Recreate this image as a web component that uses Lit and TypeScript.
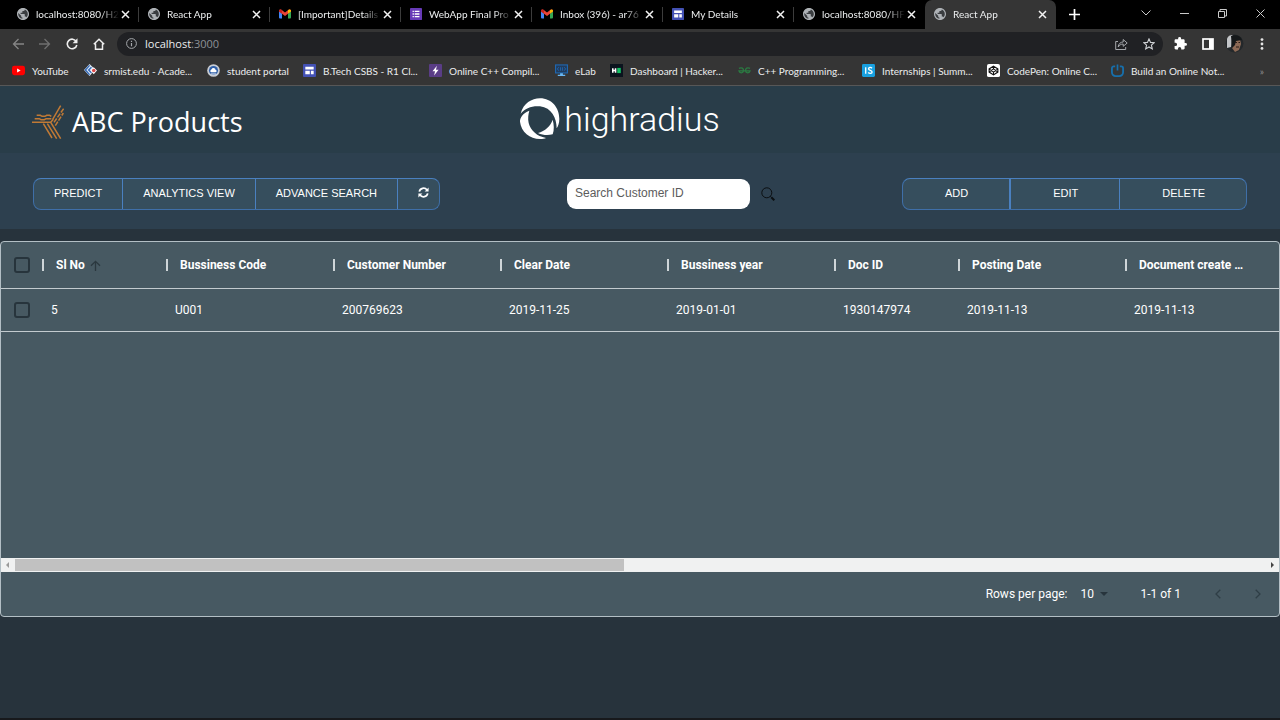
import { LitElement, html, svg, css } from "lit";
import { customElement, state } from "lit/decorators.js";
import { classMap } from "lit/directives/class-map.js";

const globe = html`<svg class="fav" viewBox="2 2 20 20"><circle cx="12" cy="12" r="9.6" fill="#3a3d40"/><path fill="#aeb2b6" d="M12 2C6.48 2 2 6.48 2 12s4.48 10 10 10 10-4.48 10-10S17.52 2 12 2zm-1 17.93c-3.95-.49-7-3.85-7-7.93 0-.62.08-1.21.21-1.79L9 15v1c0 1.1.9 2 2 2v1.93zm6.9-2.54c-.26-.81-1-1.39-1.9-1.39h-1v-3c0-.55-.45-1-1-1H8v-2h2c.55 0 1-.45 1-1V7h2c1.1 0 2-.9 2-2v-.41c2.93 1.19 5 4.06 5 7.41 0 2.08-.8 3.97-2.1 5.39z"/></svg>`;
const gmail = html`<svg class="fav" viewBox="0 0 24 24"><path fill="#4285f4" d="M0 6v13a2 2 0 0 0 2 2h4V11z"/><path fill="#34a853" d="M24 6v13a2 2 0 0 1-2 2h-4V11z"/><path fill="#ea4335" d="M0 6c0-3 3-4 5-2.400l7 5.400 7-5.400C21 2 24 3 24 6v1l-12 9L0 7z"/><path fill="#c5221f" d="M0 6c0-3 3-4 6-1.600V11L0 7z"/><path fill="#fbbc04" d="M24 6c0-3-3-4-6-1.600V11l6-4z"/></svg>`;
const forms = html`<svg class="fav" viewBox="0 0 14 14"><rect width="14" height="14" rx="1" fill="#673ab7"/><path d="M3 4h1.500M3 7h1.500M3 10h1.500M5.500 4H11M5.500 7H11M5.500 10H11" stroke="#fff" stroke-width="1.600"/></svg>`;
const sites = html`<svg class="fav" viewBox="0 0 14 14"><rect width="14" height="14" rx="1" fill="#4351b4"/><path d="M2.500 3h9v2.800h-9zM2.500 7.200h4.800V11H2.500zM8.500 7.200h3V11h-3z" fill="#fff"/></svg>`;

const tabs = [
  { icon: globe, title: "localhost:8080/H2" },
  { icon: globe, title: "React App" },
  { icon: gmail, title: "[Important]Details" },
  { icon: forms, title: "WebApp Final Pro" },
  { icon: gmail, title: "Inbox (396) - ar76" },
  { icon: sites, title: "My Details" },
  { icon: globe, title: "localhost:8080/HF" },
  { icon: globe, title: "React App", active: true },
];

const bookmarks = [
  { title: "YouTube", icon: html`<svg class="bm" viewBox="0 0 14 14"><rect y="2" width="14" height="10" rx="2.500" fill="#f00"/><path d="M5.500 4.800v4.400L9.300 7z" fill="#fff"/></svg>` },
  { title: "srmist.edu - Acade...", icon: html`<svg class="bm" viewBox="0 0 14 14"><path d="M6 0l6 6-6 7-6-6.500z" fill="#dfe9f5"/><path d="M6 1.500L1.500 6.500 6 11.500M8 3.500L5 6.500l3 3" fill="none" stroke="#3569b5" stroke-width="1.500"/><path d="M10.500 3.500L14 7l-3.500 4L7 7z" fill="#fff"/><circle cx="10.500" cy="7" r="1.900" fill="#dc4a4a"/></svg>` },
  { title: "student portal", icon: html`<svg class="bm" viewBox="0 0 14 14"><circle cx="7" cy="7" r="6.800" fill="#c9cdd4"/><circle cx="7" cy="7" r="4.900" fill="#2f5fa8"/><path d="M3.500 8c0-2 1.500-2 2-3.200 2-1 3.500.2 3.600 1.400 1.600.2 1.800 2.400.2 2.600H4.500z" fill="#fff"/><path d="M4 10.800h6" stroke="#fff"/></svg>` },
  { title: "B.Tech CSBS - R1 Cl...", icon: html`<svg class="bm" viewBox="0 0 14 14"><rect width="14" height="14" rx="1" fill="#4351b4"/><path d="M2.500 3h9v2.800h-9zM2.500 7.200h4.800V11H2.500zM8.500 7.200h3V11h-3z" fill="#fff"/></svg>` },
  { title: "Online C++ Compil...", icon: html`<svg class="bm" viewBox="0 0 14 14"><rect width="14" height="14" rx="1" fill="#5a3d86"/><path d="M8.500 1.800L3.800 7.800h2.700l-1 4.500 4.800-6.200H7.500z" fill="#fff"/></svg>` },
  { title: "eLab", icon: html`<svg class="bm" viewBox="0 0 14 14"><rect x=".6" y="1" width="12.800" height="8.600" fill="#223c5c" stroke="#1f67b1" stroke-width="1.200"/><path d="M4 3.500L2.600 5.300 4 7.200M10 3.500l1.400 1.800L10 7.200M6 3.500v3.700M8 3.500v3.700" fill="none" stroke="#1f67b1"/><path d="M5.500 10h3v1.500h2.500V13H3v-1.500h2.500z" fill="#67b7f5"/></svg>` },
  { title: "Dashboard | Hacker...", icon: html`<svg class="bm" viewBox="0 0 14 14"><rect width="14" height="14" fill="#0b141e"/><path d="M3 4.500v5M6 4.500v5M3 7h3" stroke="#fff" stroke-width="1.700"/><rect x="7.800" y="4.200" width="3.800" height="5.600" fill="#12c466"/></svg>` },
  { title: "C++ Programming...", icon: html`<svg class="bm" viewBox="0 0 14 14"><path d="M1 4.700c3-1.500 5 0 5 2.700-.5 2.800-4.500 2.800-5 0h5M13 4.700c-3-1.500-5 0-5 2.700.5 2.800 4.500 2.800 5 0H6" fill="none" stroke="#2b7a42" stroke-width="1.400"/></svg>` },
  { title: "Internships | Summ...", icon: html`<svg class="bm" viewBox="0 0 14 14"><rect width="14" height="14" rx="1.500" fill="#18a0e0"/><path d="M4 3.500v7M10.800 4.600C9.500 3.200 7 3.600 7 5.200c0 2.200 3.900 1.200 3.900 3.400 0 1.800-2.900 2-4.200.5" fill="none" stroke="#fff" stroke-width="1.400"/></svg>` },
  { title: "CodePen: Online C...", icon: html`<svg class="bm" viewBox="0 0 14 14"><rect width="14" height="14" rx="2" fill="#fff"/><path d="M7 2.300l4.700 3v3.400L7 11.700l-4.700-3V5.300zM7 2.300v3M7 8.700v3M2.300 5.300L7 8.700l4.700-3.400M2.300 8.700L7 5.300l4.700 3.400" fill="none" stroke="#111" stroke-width="1.200"/></svg>` },
  { title: "Build an Online Not...", icon: html`<svg class="bm" viewBox="0 0 14 14"><path d="M4.500 2.500H3a2 2 0 0 0-2 2V9a4 4 0 0 0 4 4h4a4 4 0 0 0 4-4V4.500a2 2 0 0 0-2-2H9.500" fill="none" stroke="#176fab" stroke-width="2"/><path d="M7 .5V7" stroke="#176fab" stroke-width="1.800"/></svg>` },
];

const columns = [
  { title: "Sl No", value: "5", sorted: true, narrow: true },
  { title: "Bussiness Code", value: "U001" },
  { title: "Customer Number", value: "200769623" },
  { title: "Clear Date", value: "2019-11-25" },
  { title: "Bussiness year", value: "2019-01-01" },
  { title: "Doc ID", value: "1930147974", narrow: true },
  { title: "Posting Date", value: "2019-11-13" },
  { title: "Document create …", value: "2019-11-13" },
];

const cross = svg`<path d="M1 1l7 7M8 1l-7 7"/>`;

@customElement("browser-chrome")
class BrowserChrome extends LitElement {
  static styles = css`
    :host { display: block; color: #eceeef; font: 10px/14px Lato, "Open Sans", sans-serif; }
    button { border: 0; padding: 0; background: none; color: inherit; font: inherit; display: grid; place-items: center; }
    a { color: inherit; text-decoration: none; }
    svg { display: block; fill: none; }
    .tabs { display: flex; height: 29px; background: #000; padding-left: 8px; padding-right: 1px; }
    .tab { display: flex; align-items: center; flex: 0 1 131px; min-width: 0; box-sizing: border-box; padding: 0 9px 1px 9px; position: relative; }
    .tab::after { content: ""; position: absolute; right: 0; top: 7px; height: 15px; width: 1px; background: #3c3c3c; }
    .tab.active { background: #353535; border-radius: 7px 7px 0 0; }
    .tab.active::after, .tab.quiet::after { display: none; }
    .fav { width: 12px; height: 12px; flex: none; margin-right: 7px; }
    .title { flex: 1; min-width: 0; overflow: hidden; white-space: nowrap; -webkit-mask-image: linear-gradient(90deg, #000 78%, transparent); mask-image: linear-gradient(90deg, #000 78%, transparent); }
    .x { stroke: #f2f2f2; stroke-width: 1.500; width: 9px; height: 9px; margin-left: 2px; }
    .plus { width: 36px; }
    .space { flex: 1; }
    .win { width: 38px; height: 26px; }
    .line { stroke: #c9c9c9; stroke-width: 1; }
    .bar { display: flex; align-items: center; height: 29px; background: #353535; padding: 0 5px 0 4px; }
    .tool { width: 27px; height: 24px; }
    .address { display: flex; flex: 1; align-items: center; height: 24px; margin: 0 4px 0 5px; padding: 0 1px 0 9px; border-radius: 12px; background: #202124; font: 11px/14px "Open Sans", sans-serif; }
    .url { flex: 1; margin-left: 8px; }
    .url span { color: #8d9196; }
    .marks { display: grid; grid-template-columns: 72px 123px 96px 126px 126px 55px 128px 124px 125px 124px 1fr auto; align-items: center; height: 28px; box-sizing: border-box; padding: 0 16px 2px 12px; background: #353535; border-bottom: 1px solid #575757; }
    .mark { display: flex; align-items: center; gap: 7px; white-space: nowrap; }
    .bm { width: 13px; height: 13px; flex: none; }
    .more { color: #8f8f8f; }
  `;
  render() {
    return html`
      <div class="tabs">
        ${tabs.map((t, i) => html`<div class=${classMap({ tab: true, active: !!t.active, quiet: i === tabs.length - 2 })}>
          ${t.icon}<span class="title">${t.title}</span>
          <button aria-label="Close tab"><svg class="x" viewBox="0 0 9 9">${cross}</svg></button></div>`)}
        <button class="plus" aria-label="New tab"><svg width="11" height="11" viewBox="0 0 11 11"><path d="M5.500 0v11M0 5.500h11" stroke="#fff" stroke-width="1.700"/></svg></button>
        <span class="space"></span>
        <button class="win" aria-label="Search tabs"><svg class="line" width="10" height="6" viewBox="0 0 10 6"><path d="M.5.5L5 5l4.500-4.500"/></svg></button>
        <button class="win" aria-label="Minimize"><svg class="line" width="9" height="9" viewBox="0 0 9 9"><path d="M0 4.500h9"/></svg></button>
        <button class="win" aria-label="Restore"><svg class="line" width="9" height="9" viewBox="0 0 9 9"><path d="M.5 2.500h6v6h-6zM2 2.500v-2h6.500V7h-2"/></svg></button>
        <button class="win" aria-label="Close"><svg class="line" width="9" height="9" viewBox="0 0 9 9"><path d="M.5.5l8 8M8.500.5l-8 8"/></svg></button>
      </div>
      <div class="bar">
        <button class="tool" aria-label="Back"><svg width="12" height="12" viewBox="0 0 12 12"><path d="M12 6H1.500M6.500 1l-5 5 5 5" stroke="#858585" stroke-width="1.300"/></svg></button>
        <button class="tool" aria-label="Forward"><svg width="12" height="12" viewBox="0 0 12 12"><path d="M0 6h10.500M5.500 1l5 5-5 5" stroke="#6f6f6f" stroke-width="1.300"/></svg></button>
        <button class="tool" aria-label="Reload"><svg width="12" height="12" viewBox="0 0 12 12"><path d="M10.300 3.600A4.800 4.800 0 1 0 10.800 7" stroke="#eee" stroke-width="1.600"/><path d="M11.500.3v4.900H6.600z" fill="#eee"/></svg></button>
        <button class="tool" aria-label="Home"><svg width="12" height="12" viewBox="0 0 12 12"><path d="M.8 6.300L6 1.200l5.200 5.100M2.500 5.500v5.700h7V5.500" stroke="#eee" stroke-width="1.500"/></svg></button>
        <div class="address">
          <svg width="11" height="11" viewBox="0 0 11 11"><circle cx="5.500" cy="5.500" r="4.900" stroke="#a5a8ac"/><path d="M5.500 5v3.200M5.500 2.700V4" stroke="#a5a8ac" stroke-width="1.200"/></svg>
          <span class="url">localhost<span>:3000</span></span>
          <button class="tool" aria-label="Share"><svg width="13" height="12" viewBox="0 0 13 12"><path d="M3 3.500H.7v8h10V9M3.200 9C3.500 5.800 5.500 4 8.200 4V1.500L12.200 5 8.200 8.300V6C6 6 4.500 7 3.200 9z" stroke="#a5a8ac"/></svg></button>
          <button class="tool" aria-label="Bookmark"><svg width="12" height="12" viewBox="0 0 12 12"><path d="M6 .9l1.500 3.500 3.800.3-2.900 2.500.9 3.700L6 9l-3.300 1.900.9-3.700L.7 4.700l3.800-.3z" stroke="#d0d3d6" stroke-width="1.100"/></svg></button>
        </div>
        <button class="tool" aria-label="Extensions"><svg width="13" height="13" viewBox="1 1 22 22"><path fill="#fff" d="M20.500 11H19V7c0-1.100-.9-2-2-2h-4V3.500a2.500 2.500 0 0 0-5 0V5H4c-1.100 0-2 .9-2 2v3.800h1.500a2.700 2.700 0 0 1 0 5.400H2V20c0 1.100.9 2 2 2h3.800v-1.500a2.700 2.700 0 0 1 5.400 0V22H17c1.100 0 2-.9 2-2v-4h1.500a2.500 2.500 0 0 0 0-5z"/></svg></button>
        <button class="tool" aria-label="Side panel"><svg width="12" height="12" viewBox="0 0 12 12"><rect x="1" y="1" width="10" height="10" stroke="#fff" stroke-width="1.700"/><path d="M7 1h4v10H7z" fill="#fff"/></svg></button>
        <button class="tool" aria-label="Profile"><svg width="19" height="19" viewBox="0 0 19 19"><circle cx="9.500" cy="9.500" r="9" fill="#24282b"/><path d="M2 4.500C3 2 5 1 7.500 1L6 13l-4 1z" fill="#c3c5c8"/><path d="M8 6l7-1 1 5-2 6-4 2-3-4z" fill="#8d6a56"/><path d="M6 2c5-2 10 0 11 4l-6 1-1 4-3 3z" fill="#15181a"/><path d="M10 8.500h2M13.500 8.500H15M11 13h3" stroke="#2a1d18"/></svg></button>
        <button class="tool" aria-label="Menu"><svg width="4" height="12" viewBox="0 0 4 12"><g fill="#e6e6e6"><circle cx="2" cy="1.600" r="1.400"/><circle cx="2" cy="6" r="1.400"/><circle cx="2" cy="10.400" r="1.400"/></g></svg></button>
      </div>
      <nav class="marks">
        ${bookmarks.map((b) => html`<a class="mark" href="#">${b.icon}<span>${b.title}</span></a>`)}
        <span class="more">»</span>
      </nav>`;
  }
}

@customElement("invoice-grid")
class InvoiceGrid extends LitElement {
  static styles = css`
    :host { display: block; border: 1px solid #b3bfc5; border-radius: 4px; overflow: hidden; background: #475962; color: #fff; font: 12px/18px Roboto, sans-serif; }
    .body { height: 316px; overflow: hidden; }
    table { table-layout: fixed; border-collapse: separate; border-spacing: 0; width: 1291px; }
    .pick { width: 41px; }
    .narrow { width: 124px; }
    .wide { width: 167px; }
    th, td { padding: 0; border-bottom: 1px solid #c3cbcf; text-align: left; white-space: nowrap; }
    th { height: 46px; font-weight: 700; }
    td { height: 42px; padding-left: 9px; }
    .check { padding-left: 13px; }
    .head { display: flex; align-items: center; }
    .head::before { content: ""; width: 2px; height: 12px; margin-right: 12px; background: #ced5d8; }
    .arrow { margin-left: 5px; }
    input { appearance: none; display: block; box-sizing: border-box; width: 16px; height: 16px; margin: 0; border: 2px solid #27343c; border-radius: 3px; }
    .scroll { display: flex; align-items: center; height: 14px; background: #f0f1f1; }
    .scroll svg { flex: none; width: 14px; height: 8px; }
    .track { flex: 1; height: 12px; }
    .thumb { height: 12px; background: #c1c1c1; }
    .foot { display: flex; align-items: center; justify-content: flex-end; height: 44px; padding-right: 7px; }
    .pager { position: relative; display: flex; align-items: center; margin: 0 32px 0 13px; }
    select { appearance: none; width: 28px; padding: 0; border: 0; background: none; color: inherit; font: inherit; }
    .caret { position: absolute; right: 0; pointer-events: none; }
    .range { margin-right: 23px; }
    .step { display: grid; place-items: center; width: 28px; height: 28px; margin-right: 12px; padding: 0; border: 0; background: none; }
    .step:last-child { margin-right: 0; }
  `;
  render() {
    return html`
      <div class="body"><table>
        <colgroup><col class="pick">${columns.map((c) => html`<col class=${c.narrow ? "narrow" : "wide"}>`)}</colgroup>
        <thead><tr><th class="check"><input type="checkbox" aria-label="Select all rows"></th>
          ${columns.map((c) => html`<th><div class="head">${c.title}${c.sorted ? html`<svg class="arrow" width="11" height="11" viewBox="0 0 11 11"><path d="M5.500 11V1.500M1 5.800l4.500-4.500L10 5.800" fill="none" stroke="#2b383f" stroke-width="1.300"/></svg>` : ""}</div></th>`)}
        </tr></thead>
        <tbody><tr><td class="check"><input type="checkbox" aria-label="Select row 5"></td>${columns.map((c) => html`<td>${c.value}</td>`)}</tr></tbody>
      </table></div>
      <div class="scroll">
        <svg viewBox="0 0 14 8"><path d="M8 1v6L5 4z" fill="#9a9a9a"/></svg>
        <div class="track"><div class="thumb" style="width:${(609 / 1250) * 100}%"></div></div>
        <svg viewBox="0 0 14 8"><path d="M6 1v6l3-3z" fill="#444"/></svg>
      </div>
      <div class="foot">
        <label for="size">Rows per page:</label>
        <span class="pager"><select id="size"><option>10</option><option>25</option></select><svg class="caret" width="8" height="4" viewBox="0 0 8 4"><path d="M0 0h8L4 4z" fill="#27343c"/></svg></span>
        <span class="range">1-1 of 1</span>
        <button class="step" aria-label="Previous page"><svg width="6" height="10" viewBox="0 0 6 10"><path d="M5.300.7L1 5l4.300 4.300" fill="none" stroke="#2f3e46" stroke-width="1.300"/></svg></button>
        <button class="step" aria-label="Next page"><svg width="6" height="10" viewBox="0 0 6 10"><path d="M.7.7L5 5 .7 9.300" fill="none" stroke="#2f3e46" stroke-width="1.300"/></svg></button>
      </div>`;
  }
}

@customElement("app-root")
class AppRoot extends LitElement {
  static styles = css`
    :host { display: flex; flex-direction: column; box-sizing: border-box; min-height: 100vh; background: #27333c; border-bottom: 2px solid #17191c; color: #fff; }
    svg { display: block; }
    .brand { display: grid; grid-template-columns: 1fr auto 1fr; align-items: center; height: 67px; box-sizing: border-box; padding: 0 72px 0 32px; background: #293d49; }
    .abc { display: flex; align-items: center; gap: 8px; font: 27px/36px "Open Sans", "Noto Sans", sans-serif; padding-top: 4px; }
    .radius { display: flex; align-items: center; gap: 4px; padding-bottom: 2px; font: 300 34px/40px Roboto, sans-serif; }
    .actions { display: flex; align-items: center; justify-content: space-between; height: 76px; box-sizing: border-box; padding: 5px 33px 0; background: #2d404f; margin-bottom: 12px; }
    .group { display: flex; height: 32px; box-sizing: border-box; border: 1px solid #3f6fa8; border-top-color: #4a80c0; border-radius: 8px; overflow: hidden; background: #364e5d; }
    .group button { display: grid; place-items: center; padding: 0 20px 2px; border: 0; border-left: 1px solid #4a80c0; background: none; color: #fff; font: 11px/16px "Liberation Sans", Arial, sans-serif; }
    .group button:first-child { border-left: 0; }
    .group .icon { padding: 0 10px 2px 20px; }
    .group.crud button { padding: 0 41px 2px 42px; }
    .crud button:nth-child(2) { border-left-width: 2px; }
    .search { display: flex; align-items: center; gap: 11px; }
    .search input { box-sizing: border-box; width: 183px; height: 30px; padding: 0 8px 2px; border: 0; border-radius: 9px; background: #fff; color: #333; font: 12px/16px "Liberation Sans", Arial, sans-serif; }
    .search input::placeholder { color: #5c5c5c; opacity: 1; }
    .search button { padding: 0; border: 0; background: none; }
  `;
  @state() private query = "";
  render() {
    return html`
      <browser-chrome></browser-chrome>
      <header class="brand">
        <div class="abc">
          <svg width="32" height="34" viewBox="0 0 96 102"><g fill="none" stroke="#c17a35" stroke-width="4.500"><path d="M0 52h56l30 49M34 56l26 43M46 56l28 45M14 31h11l5 3h9l5-3h9l5 3M8 41h14l5 3h10l5-3h16M62 43L86 2M56 52l8-9"/><path d="M66 52L95 11M70 62l24-38" stroke-dasharray="14 4"/></g></svg>
          <span>ABC Products</span>
        </div>
        <div class="radius">
          <svg width="40" height="42" viewBox="0 0 120 124" fill="#fff"><path d="M2 46C10 15 35 0 60 0c35 0 58 28 58 62 0 13-4 22-8 28 0-30-15-62-50-66C35 22 15 30 2 46z"/><path d="M28 37C8 44 0 58 0 70c3 30 30 52 60 52 8 0 14-1 18-3-28-6-46-22-52-45-3-13-1-27 2-37z"/><path d="M98 64c-6 19-23 34-44 40 14 7 30 8 44 4 5-13 4-30 0-44z"/></svg>
          <span>highradius</span>
        </div>
      </header>
      <div class="actions">
        <div class="group"><button>PREDICT</button><button>ANALYTICS VIEW</button><button>ADVANCE SEARCH</button><button class="icon" aria-label="Refresh"><svg width="11" height="11" viewBox="0 0 11 11"><path d="M1.300 4.700A4.300 4.300 0 0 1 9 3M9.700 6.300A4.300 4.300 0 0 1 2 8" fill="none" stroke="#fff" stroke-width="1.700"/><path d="M10.600.6v4H6.600zM.4 10.400v-4h4z" fill="#fff"/></svg></button></div>
        <div class="search">
          <input type="text" aria-label="Search Customer ID" placeholder="Search Customer ID" .value=${this.query} @input=${(e: Event) => (this.query = (e.target as HTMLInputElement).value)}>
          <button aria-label="Search"><svg width="14" height="14" viewBox="0 0 14 14"><circle cx="5.800" cy="5.800" r="5" fill="none" stroke="#0b0f12"/><path d="M9.300 9.300l1 1" stroke="#0b0f12"/><path d="M10.300 10.300l3 3" stroke="#0b0f12" stroke-width="2"/></svg></button>
        </div>
        <div class="group crud"><button>ADD</button><button>EDIT</button><button>DELETE</button></div>
      </div>
      <invoice-grid></invoice-grid>`;
  }
}
